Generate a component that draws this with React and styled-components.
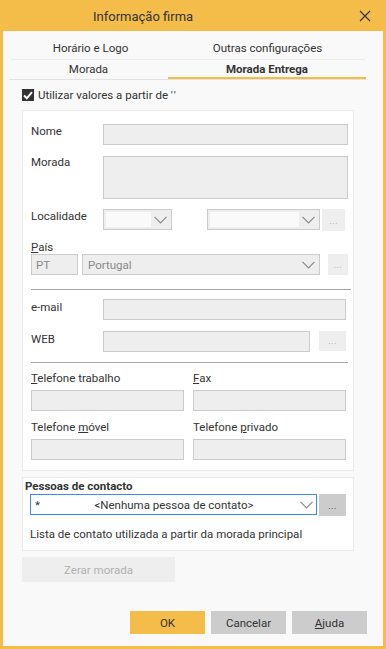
import React from 'react';
import styled, { createGlobalStyle } from 'styled-components';

const yellow = '#f4bd4a';

const Global = createGlobalStyle`
  html, body { margin: 0; padding: 0; background: #ffffff; }
  body { font-family: Roboto, "Liberation Sans", Arial, sans-serif; font-size: 11.5px; color: #333; }
  * { box-sizing: border-box; }
`;

const Window = styled.div`
  width: 386px;
  height: 649px;
  border: 3px solid ${yellow};
  border-top: 0;
  background: #f9f9f9;
  display: flex;
  flex-direction: column;
`;

const TitleBar = styled.div`
  height: 31px;
  margin: 0 -3px;
  background: ${yellow};
  display: flex;
  align-items: center;
  padding-left: 93px;
  padding-right: 15px;
`;

const Title = styled.div`
  font-size: 13px;
  color: #333;
  flex: 1;
  padding-top: 2px;
`;

const Close = styled.div`
  width: 12px;
  height: 12px;
  display: flex;
  margin-top: 1px;
`;

const TabRow = styled.div`
  display: grid;
  grid-template-columns: ${p => p.$first}px 1fr;
  margin-left: ${p => p.$left}px;
  width: ${p => p.$width}px;
  margin-top: ${p => p.$top || 0}px;
  border-bottom: 1px solid ${p => p.$line};
`;

const Tab = styled.div`
  height: ${p => p.$h}px;
  line-height: ${p => p.$h}px;
  text-align: center;
  color: #333;
  font-weight: ${p => (p.$active ? 700 : 400)};
  border-bottom: ${p => (p.$active ? `2px solid ${yellow}` : '0')};
  margin-bottom: ${p => (p.$active ? '-1px' : '0')};
`;

const CheckRow = styled.div`
  display: flex;
  align-items: center;
  gap: 4px;
  margin: 9px 0 0 19px;
  height: 12px;
  line-height: 14px;
`;

const CheckBox = styled.div`
  width: 12px;
  height: 12px;
  background: #333;
  display: flex;
  align-items: center;
  justify-content: center;
`;

const Quote = styled.span`
  letter-spacing: 1.5px;
`;

const Panel = styled.div`
  margin: ${p => p.$top}px 0 0 19px;
  width: 332px;
  background: #fff;
  border: 1px solid #ebebeb;
  padding: ${p => p.$pad};
`;

const Field = styled.div`
  display: grid;
  grid-template-columns: 72px 1fr;
  margin-top: ${p => p.$top || 0}px;
`;

const Label = styled.div`
  line-height: 14px;
  margin-top: ${p => p.$top || 0}px;
  color: #333;
`;

const Box = styled.div`
  height: ${p => p.$h || 21}px;
  width: ${p => (p.$w ? `${p.$w}px` : 'auto')};
  background: #eeeeee;
  border: 1px solid #cbcbcb;
  color: #8a8a8a;
  display: flex;
  align-items: center;
  padding-left: 4px;
  flex-shrink: 0;
`;

const Line = styled.div`
  display: flex;
  align-items: flex-start;
  gap: ${p => p.$gap || 0}px;
`;

const Combo = styled.div`
  height: 21px;
  width: ${p => p.$w}px;
  background: #eeeeee;
  border: 1px solid #cbcbcb;
  display: flex;
  align-items: center;
  padding: 2px 4px 2px 2px;
  color: #8a8a8a;
  flex-shrink: 0;
`;

const ComboInput = styled.div`
  flex: 1;
  align-self: stretch;
  background: ${p => (p.$light ? '#fafafa' : 'transparent')};
  padding-left: 3px;
  display: flex;
  align-items: center;
  margin-right: 3px;
`;

const Dots = styled.div`
  width: ${p => p.$w}px;
  height: ${p => p.$h || 22}px;
  background: ${p => p.$dark ? '#cccccc' : '#eeeeee'};
  color: ${p => p.$dark ? '#333' : '#a0a0a0'};
  font-size: 9px;
  display: flex;
  align-items: flex-end;
  justify-content: center;
  padding-bottom: 5px;
  flex-shrink: 0;
  letter-spacing: 0.5px;
`;

const Sep = styled.div`
  height: 1px;
  width: ${p => p.$w}px;
  background: #a6a6a6;
  margin-top: ${p => p.$top}px;
`;

const PhoneGrid = styled.div`
  display: grid;
  grid-template-columns: 153px 153px;
  column-gap: 9px;
  margin-top: ${p => p.$top}px;
`;

const PhoneCell = styled.div`
  display: flex;
  flex-direction: column;
  gap: 5px;
`;

const SectionTitle = styled.div`
  font-weight: 700;
  line-height: 14px;
  color: #333;
`;

const ContactRow = styled.div`
  display: flex;
  gap: 2px;
  margin: 1px 0 0 5px;
`;

const ContactCombo = styled.div`
  width: 287px;
  height: 21px;
  border: 1px solid #3d8be6;
  background: #fff;
  display: flex;
  align-items: center;
  padding: 0 3px 0 4px;
  color: #333;
`;

const ContactText = styled.div`
  flex: 1;
  text-align: center;
  padding-left: 8px;
`;

const Note = styled.div`
  margin: 11px 0 0 5px;
  line-height: 14px;
  color: #333;
`;

const ResetButton = styled.div`
  margin: 6px 0 0 19px;
  width: 153px;
  height: 25px;
  background: #eeeeee;
  color: #b0b0b0;
  display: flex;
  align-items: center;
  justify-content: center;
`;

const Footer = styled.div`
  margin-top: auto;
  display: flex;
  justify-content: flex-end;
  gap: 6px;
  padding: 0 16px 12px 0;
`;

const Button = styled.div`
  width: 75px;
  height: 23px;
  background: ${p => (p.$primary ? yellow : '#cccccc')};
  color: #333;
  display: flex;
  align-items: center;
  justify-content: center;
`;

const Chevron = () => (
  <svg width="13" height="8" viewBox="0 0 13 8" style={{ flexShrink: 0 }}>
    <polyline points="0.5,0.8 6.5,6.8 12.5,0.8" fill="none" stroke="#8a8a8a" strokeWidth="1.2" />
  </svg>
);

const Ellipsis = ({ w, h, dark }) => (
  <Dots $w={w} $h={h} $dark={dark}>...</Dots>
);

export default function App() {
  return (
    <>
      <Global />
      <Window>
        <TitleBar>
          <Title>Informação firma</Title>
          <Close>
            <svg width="12" height="12" viewBox="0 0 12 12">
              <path d="M1 1L11 11M11 1L1 11" stroke="#333" strokeWidth="1.1" fill="none" />
            </svg>
          </Close>
        </TitleBar>

        <TabRow $first={159} $left={8} $width={354} $top={7} $line="#ececec">
          <Tab $h={21}>Horário e Logo</Tab>
          <Tab $h={21}>Outras configurações</Tab>
        </TabRow>
        <TabRow $first={159} $left={6} $width={357} $line="#e3e3e3">
          <Tab $h={19}>Morada</Tab>
          <Tab $h={19} $active>Morada Entrega</Tab>
        </TabRow>

        <CheckRow>
          <CheckBox>
            <svg width="10" height="9" viewBox="0 0 10 9">
              <polyline points="1,4.5 3.8,7.3 9,1.2" fill="none" stroke="#fff" strokeWidth="2" />
            </svg>
          </CheckBox>
          <span>Utilizar valores a partir de <Quote>''</Quote></span>
        </CheckRow>

        <Panel $top={9} $pad="13px 5px 10px 8px">
          <Field>
            <Label>Nome</Label>
            <Box />
          </Field>
          <Field $top={11}>
            <Label $top={-1}>Morada</Label>
            <Box $h={43} />
          </Field>
          <Field $top={10}>
            <Label>Localidade</Label>
            <Line>
              <Combo $w={69}>
                <ComboInput $light />
                <Chevron />
              </Combo>
              <div style={{ width: 35 }} />
              <Combo $w={113}>
                <ComboInput $light />
                <Chevron />
              </Combo>
              <div style={{ width: 2 }} />
              <Ellipsis w={23} h={22} />
            </Line>
          </Field>
          <Label $top={9}><u>P</u>aís</Label>
          <Line $gap={4}>
            <Box $w={47} $h={21}>PT</Box>
            <Combo $w={238}>
              <ComboInput>Portugal</ComboInput>
              <Chevron />
            </Combo>
            <div style={{ width: 1 }} />
            <Ellipsis w={20} h={21} />
          </Line>
          <Sep $w={320} $top={14} />
          <Field $top={9}>
            <Label $top={1}>e-mail</Label>
            <Box $w={243} />
          </Field>
          <Field $top={11}>
            <Label $top={1}>WEB</Label>
            <Line $gap={9}>
              <Box $w={207} />
              <Ellipsis w={27} h={20} />
            </Line>
          </Field>
          <Sep $w={317} $top={10} />
          <PhoneGrid $top={8}>
            <PhoneCell>
              <Label><u>T</u>elefone trabalho</Label>
              <Box />
            </PhoneCell>
            <PhoneCell>
              <Label><u>F</u>ax</Label>
              <Box />
            </PhoneCell>
          </PhoneGrid>
          <PhoneGrid $top={9}>
            <PhoneCell>
              <Label>Telefone <u>m</u>óvel</Label>
              <Box />
            </PhoneCell>
            <PhoneCell>
              <Label>Telefone <u>p</u>rivado</Label>
              <Box />
            </PhoneCell>
          </PhoneGrid>
        </Panel>

        <Panel $top={6} $pad="1px 0 9px 2px">
          <SectionTitle>Pessoas de contacto</SectionTitle>
          <ContactRow>
            <ContactCombo>
              <span>*</span>
              <ContactText>&lt;Nenhuma pessoa de contato&gt;</ContactText>
              <Chevron />
            </ContactCombo>
            <Ellipsis w={27} h={22} dark />
          </ContactRow>
          <Note>Lista de contato utilizada a partir da morada principal</Note>
        </Panel>

        <ResetButton>Zerar morada</ResetButton>

        <Footer>
          <Button $primary>OK</Button>
          <Button>Cancelar</Button>
          <Button><span><u>A</u>juda</span></Button>
        </Footer>
      </Window>
    </>
  );
}
